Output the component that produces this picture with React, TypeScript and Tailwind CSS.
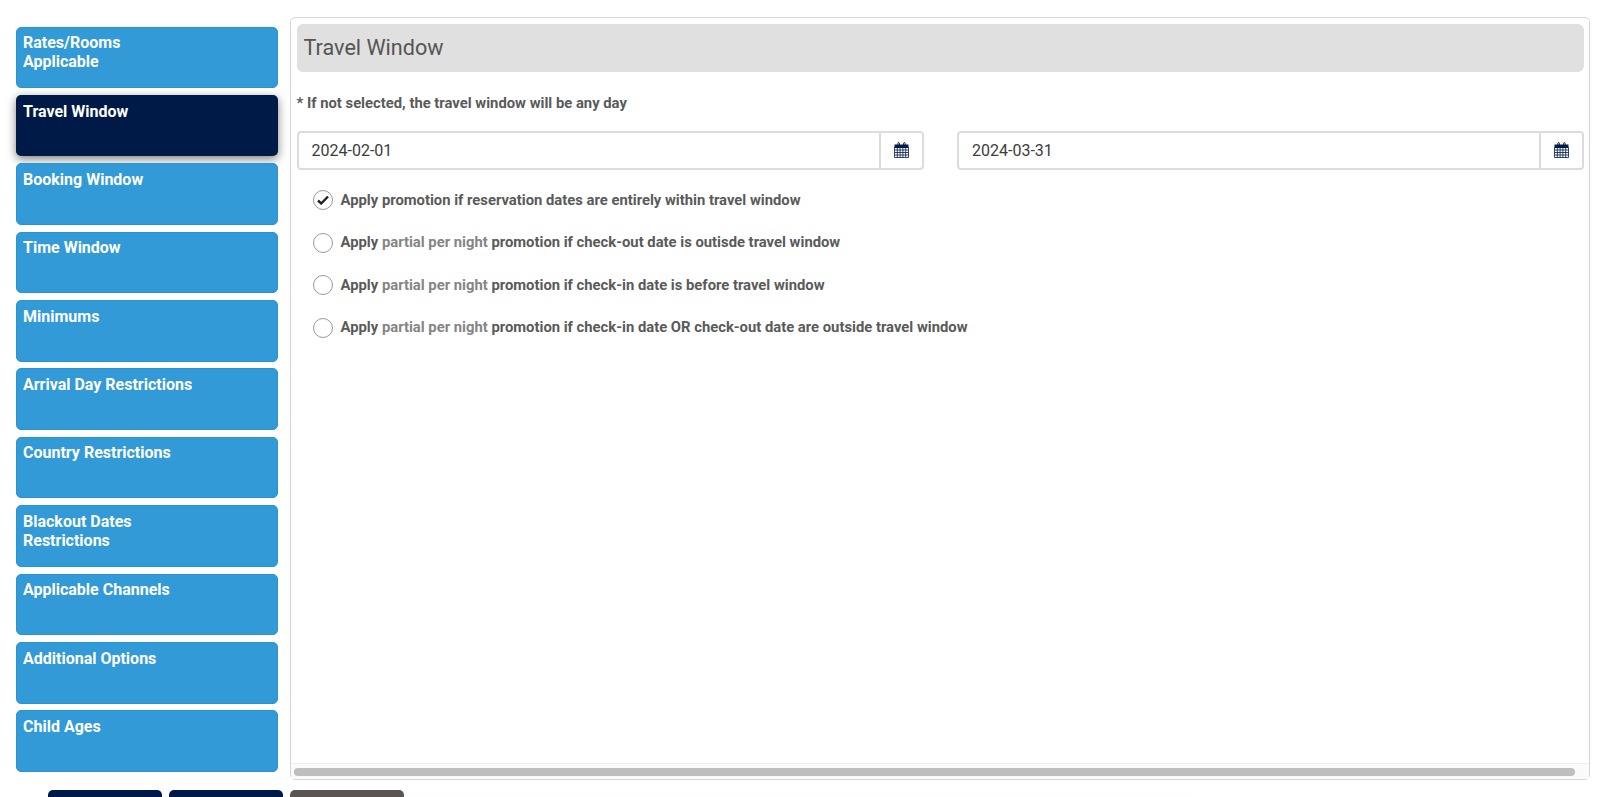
import { Fragment } from 'react'

const tabs = [
  ['Rates/Rooms', 'Applicable'],
  ['Travel Window'],
  ['Booking Window'],
  ['Time Window'],
  ['Minimums'],
  ['Arrival Day Restrictions'],
  ['Country Restrictions'],
  ['Blackout Dates', 'Restrictions'],
  ['Applicable Channels'],
  ['Additional Options'],
  ['Child Ages'],
]

const options = [
  { checked: true, parts: ['Apply promotion if reservation dates are entirely within travel window'] },
  { checked: false, parts: ['Apply ', 'partial per night', ' promotion if check-out date is outisde travel window'] },
  { checked: false, parts: ['Apply ', 'partial per night', ' promotion if check-in date is before travel window'] },
  { checked: false, parts: ['Apply ', 'partial per night', ' promotion if check-in date OR check-out date are outside travel window'] },
]

function CalendarIcon() {
  return (
    <svg width="15" height="16" viewBox="0 0 15 16" className="mb-[2px] text-[#001a47]">
      {/* rings */}
      <path d="M3.8 3V1.4a.8.8 0 0 1 1.6 0V3M9.6 3V1.4a.8.8 0 0 1 1.6 0V3" fill="none" stroke="currentColor" strokeWidth="1" />
      {/* header bar */}
      <path d="M0.5 2.5h14V6h-14z" fill="currentColor" />
      {/* grid */}
      <path
        d="M0.5 5.5h14v10h-14zM0.5 8h14M0.5 10.5h14M0.5 13h14M3.3 5.5v10M6.1 5.5v10M8.9 5.5v10M11.7 5.5v10"
        fill="none"
        stroke="currentColor"
        strokeWidth="0.8"
      />
    </svg>
  )
}

function DateField({ value, className }: { value: string; className: string }) {
  return (
    <div className={`flex h-[39px] rounded-[4px] border-2 border-[#dcdcdc] bg-white ${className}`}>
      <div className="flex-1 pl-[13px] text-[16px] leading-[35px] text-[#3c3c3c]">{value}</div>
      <div className="flex w-[43px] items-center justify-center border-l-2 border-[#dcdcdc]">
        <CalendarIcon />
      </div>
    </div>
  )
}

export default function App() {
  return (
    <div className="h-[797px] overflow-hidden bg-white font-['Roboto',sans-serif]">
      <div className="flex gap-3 pl-4 pr-[10px] pt-[17px]">
        <div className="flex w-[262px] shrink-0 flex-col gap-[6.9px] pt-[9.5px]">
          {tabs.map(lines => {
            const active = lines[0] === 'Travel Window'
            return (
              <div
                key={lines[0]}
                className={`h-[61.5px] rounded-[5px] text-[16px] font-bold leading-[19px] text-white ${
                  active
                    ? 'bg-[#001a47] px-[7px] pt-[7px] shadow-[0_3px_10px_rgba(0,0,0,0.5)]'
                    : 'border border-[#2a94d2] bg-[#329ad6] px-[6px] pt-[5.5px]'
                }`}
              >
                {lines.map(line => (
                  <div key={line}>{line}</div>
                ))}
              </div>
            )
          })}
        </div>

        <div className="flex h-[763px] flex-1 flex-col rounded-[5px] border border-[#d6d6d6]">
          <div className="flex-1 px-[5.5px] pt-[6px]">
            <div className="h-[48px] rounded-[6px] bg-[#e0e0e0] pl-[7px] text-[21.6px] leading-[48px] text-[#555]">
              Travel Window
            </div>
            <p className="mt-[21px] text-[14.8px] font-bold leading-[20px] text-[#5a5a5a]">
              * If not selected, the travel window will be any day
            </p>
            <div className="mt-[18px] flex gap-[33.5px]">
              <DateField value="2024-02-01" className="w-[627px]" />
              <DateField value="2024-03-31" className="flex-1" />
            </div>
            <div className="mt-[20px] flex flex-col gap-[22.5px] pl-[16.5px]">
              {options.map((option, i) => (
                <div key={i} className="flex h-[20px] items-center gap-[7.5px] text-[14.8px] font-bold text-[#5a5a5a]">
                  <span className="flex h-[20px] w-[20px] items-center justify-center rounded-full border border-[#999] bg-white">
                    {option.checked && (
                      <svg width="12" height="10" viewBox="0 0 12 10">
                        <path d="M1 5.5 4.2 8.5 11 1.5" fill="none" stroke="#222" strokeWidth="2.4" />
                      </svg>
                    )}
                  </span>
                  <span>
                    {option.parts.map((part, j) => (
                      <Fragment key={j}>
                        {j === 1 ? <span className="text-[#858585]">{part}</span> : part}
                      </Fragment>
                    ))}
                  </span>
                </div>
              ))}
            </div>
          </div>
          <div className="h-[16px] border-t border-[#efefef] bg-[#fafafa] pl-[3px] pr-[14px] pt-[4px]">
            <div className="h-[8px] rounded-full bg-[#bebebe]" />
          </div>
        </div>
      </div>

      <div className="mt-[10px] flex gap-[7px] pl-12">
        <div className="h-[40px] w-[114px] rounded-[5px] bg-[#001a47]" />
        <div className="h-[40px] w-[114px] rounded-[5px] bg-[#001a47]" />
        <div className="h-[40px] w-[114px] rounded-[5px] bg-[#5a5452]" />
        <div className="h-[40px] w-[790px] -ml-[7px] bg-gradient-to-b from-white to-[#f8f8f8]" />
      </div>
    </div>
  )
}
